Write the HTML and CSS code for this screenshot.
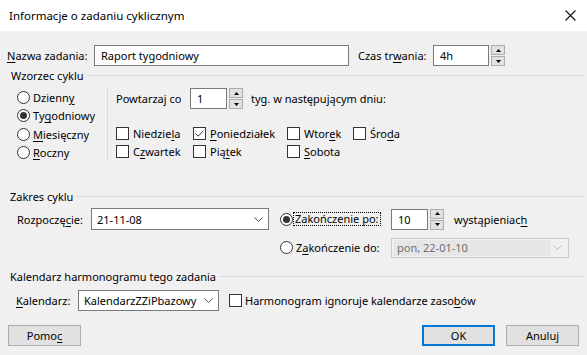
FILE: index.html
```html
<!DOCTYPE html>
<html lang="pl">
<head>
<meta charset="utf-8">
<title>Informacje o zadaniu cyklicznym</title>
<link rel="stylesheet" href="styles.css">
</head>
<body>
<div class="win">
  <div class="titlebar">
    <span class="title">Informacje o zadaniu cyklicznym</span>
    <svg class="close" width="11" height="11" viewBox="0 0 11 11"><path d="M0.5 0.5L10.5 10.5M10.5 0.5L0.5 10.5" stroke="#111" stroke-width="1.1" fill="none"/></svg>
  </div>
  <div class="content">
    <div class="row name-row">
      <span class="name-lbl"><u>N</u>azwa zadania:</span>
      <div class="tb name-tb">Raport tygodniowy</div>
      <span class="dur-lbl">Czas tr<u>w</u>ania:</span>
      <div class="tb dur-tb">4h</div>
      <div class="spin"><b><svg width="5" height="3" viewBox="0 0 5 3"><path d="M2.5 0L5 3H0z" fill="#000"/></svg></b><b><svg width="5" height="3" viewBox="0 0 5 3"><path d="M0 0H5L2.5 3z" fill="#000"/></svg></b></div>
    </div>

    <div class="gh g1"><span>Wzorzec cyklu</span><i></i></div>
    <div class="pattern">
      <div class="radios">
        <div class="opt"><span class="radio"></span><span>Dzienn<u>y</u></span></div>
        <div class="opt"><span class="radio on"></span><span>Ty<u>g</u>odniowy</span></div>
        <div class="opt"><span class="radio"></span><span><u>M</u>iesięczny</span></div>
        <div class="opt"><span class="radio"></span><span><u>R</u>oczny</span></div>
      </div>
      <div class="vsep"></div>
      <div class="weekly">
        <div class="row every">
          <span class="every-lbl">Powtarzaj co</span>
          <div class="tb small-tb">1</div>
          <div class="spin"><b><svg width="5" height="3" viewBox="0 0 5 3"><path d="M2.5 0L5 3H0z" fill="#000"/></svg></b><b><svg width="5" height="3" viewBox="0 0 5 3"><path d="M0 0H5L2.5 3z" fill="#000"/></svg></b></div>
          <span class="after">tyg. w następującym dniu:</span>
        </div>
        <div class="days">
          <div class="day"><span class="cb"></span><span>Niedzie<u>l</u>a</span></div>
          <div class="day"><span class="cb"><svg width="11" height="11" viewBox="0 0 11 11"><path d="M1.5 5.5L4.2 8.2L9.5 2.5" stroke="#333" stroke-width="1" fill="none"/></svg></span><span><u>P</u>oniedziałek</span></div>
          <div class="day"><span class="cb"></span><span>Wtor<u>e</u>k</span></div>
          <div class="day"><span class="cb"></span><span>Śro<u>d</u>a</span></div>
          <div class="day"><span class="cb"></span><span>C<u>z</u>wartek</span></div>
          <div class="day"><span class="cb"></span><span>Pią<u>t</u>ek</span></div>
          <div class="day"><span class="cb"></span><span><u>S</u>obota</span></div>
        </div>
      </div>
    </div>

    <div class="gh g2"><span>Zakres cyklu</span><i></i></div>
    <div class="row range1">
      <span class="start-lbl">Rozpoczę<u>c</u>ie:</span>
      <div class="combo start-combo"><span>21-11-08</span><svg width="9" height="5" viewBox="0 0 9 5"><path d="M0.5 0.5L4.5 4.5L8.5 0.5" stroke="#555" fill="none"/></svg></div>
      <div class="endopt"><span class="radio on"></span><span class="focus">Zakończenie po:</span></div>
      <div class="tb small-tb">10</div>
      <div class="spin"><b><svg width="5" height="3" viewBox="0 0 5 3"><path d="M2.5 0L5 3H0z" fill="#000"/></svg></b><b><svg width="5" height="3" viewBox="0 0 5 3"><path d="M0 0H5L2.5 3z" fill="#000"/></svg></b></div>
      <span class="after2">wystąpieniac<u>h</u></span>
    </div>
    <div class="row range2">
      <div class="endopt"><span class="radio"></span><span class="plain">Z<u>a</u>kończenie do:</span></div>
      <div class="combo disabled"><span class="dtext">pon, 22-01-10</span><svg width="9" height="5" viewBox="0 0 9 5"><path d="M0.5 0.5L4.5 4.5L8.5 0.5" stroke="#b5b5b5" fill="none"/></svg></div>
    </div>

    <div class="gh g3"><span>Kalendarz harmonogramu tego zadania</span><i></i></div>
    <div class="row cal">
      <span class="cal-lbl"><u>K</u>alendarz:</span>
      <div class="combo cal-combo"><span>KalendarzZZiPbazowy</span><svg width="9" height="5" viewBox="0 0 9 5"><path d="M0.5 0.5L4.5 4.5L8.5 0.5" stroke="#555" fill="none"/></svg></div>
      <span class="cb cal-cb"></span>
      <span class="cal-text">Harmonogram ignoruje kalendarze zaso<u>b</u>ów</span>
    </div>

    <div class="row buttons">
      <div class="btn"><span>Pomo<u>c</u></span></div>
      <div class="spacer"></div>
      <div class="btn ok">OK</div>
      <div class="btn">Anuluj</div>
    </div>
  </div>
</div>
</body>
</html>
```
FILE: styles.css
```css
* { box-sizing: border-box; margin: 0; padding: 0; }
html, body { width: 587px; height: 355px; overflow: hidden; }
body {
  font-family: "Noto Sans", "Segoe UI", sans-serif;
  font-size: 11px;
  color: #000;
  background: #f0f0f0;
}
u { text-decoration: underline; text-underline-offset: 2px; text-decoration-thickness: 1px; }

.win { width: 587px; height: 355px; background: #f0f0f0; }

.titlebar {
  height: 31px;
  background: #fff;
  display: flex;
  align-items: center;
  justify-content: space-between;
  padding: 0 11px 0 9px;
}
.title { font-size: 11.5px; }
.close { display: block; }

.content { padding: 0 2px 0 7px; }
.row { display: flex; align-items: center; }

.tb {
  height: 21px;
  border: 1px solid #7a7a7a;
  background: #fff;
  display: flex;
  align-items: center;
  padding-left: 6px;
  flex: none;
}
.spin {
  margin-left: 2px;
  width: 14px;
  height: 21px;
  display: flex;
  flex-direction: column;
  gap: 1px;
  flex: none;
}
.spin b {
  flex: 1;
  background: #e1e1e1;
  border: 1px solid #adadad;
  display: flex;
  align-items: center;
  justify-content: center;
}
.spin svg { display: block; }

.name-row { margin-top: 14px; height: 21px; }
.name-lbl { width: 87px; flex: none; }
.name-tb { width: 255px; }
.dur-lbl { margin-left: 9px; width: 75px; flex: none; }
.dur-tb { width: 56px; }

.gh { display: flex; align-items: center; height: 14px; }
.gh span { padding: 0 3px 0 4px; }
.gh i { flex: 1; border-top: 1px solid #dcdcdc; }
.g1 { margin-top: 2px; }
.g2 { margin-top: 27px; }
.g2 span, .g3 span { padding-left: 3px; }
.g3 { margin-top: 11px; }

.pattern { display: flex; margin-top: 6px; }
.radios { width: 100px; padding-left: 10px; flex: none; }
.opt { height: 18.5px; display: flex; align-items: center; gap: 3px; }
.radio {
  width: 13px;
  height: 13px;
  border: 1px solid #333;
  border-radius: 50%;
  background: #fff;
  flex: none;
  display: flex;
  align-items: center;
  justify-content: center;
}
.radio.on::after {
  content: "";
  width: 7px;
  height: 7px;
  border-radius: 50%;
  background: #333;
}
.vsep { width: 1px; height: 72px; background: #dcdcdc; flex: none; }
.weekly { margin-left: 8px; }
.every { height: 21px; }
.every-lbl { width: 74px; flex: none; }
.small-tb { width: 37px; }
.after { margin-left: 8px; }

.days {
  display: grid;
  grid-template-columns: 77px 94px 66px auto;
  grid-auto-rows: 18px;
  margin-top: 15px;
}
.day { display: flex; align-items: center; gap: 4px; }
.cb {
  width: 13px;
  height: 13px;
  border: 1px solid #333;
  background: #fff;
  flex: none;
  display: flex;
  align-items: center;
  justify-content: center;
}
.cb svg { display: block; }

.combo {
  height: 22px;
  border: 1px solid #7a7a7a;
  background: #fff;
  display: flex;
  align-items: center;
  justify-content: space-between;
  padding: 0 5px;
  flex: none;
}
.combo svg { display: block; }

.range1 { margin-top: 5px; height: 22px; padding-left: 10px; }
.start-lbl { width: 74px; flex: none; }
.start-combo { width: 178px; }
.endopt { display: flex; align-items: center; gap: 1px; width: 111px; margin-left: 11px; flex: none; }
.focus { outline: 1px dotted #000; padding: 0 1px; line-height: 12px; }
.plain { padding-left: 2px; }
.after2 { margin-left: 10px; }

.range2 { margin-top: 7px; height: 21px; padding-left: 273px; }
.range2 .endopt { margin-left: 0; }
.combo.disabled {
  width: 178px;
  height: 20px;
  border-color: #cccccc;
  background: #f0f0f0;
  padding: 0 6px 0 2px;
}
.dtext {
  color: #6d6d6d;
  background: #e6e6e6;
  height: 16px;
  width: 157px;
  display: flex;
  align-items: center;
  padding-left: 3px;
}

.cal { margin-top: 7px; height: 21px; padding-left: 9px; }
.cal-lbl { width: 62px; flex: none; }
.cal-combo { width: 141px; height: 21px; }
.cal-cb { margin-left: 10px; }
.cal-text { margin-left: 3px; }

.buttons { margin-top: 14px; padding-left: 1px; padding-right: 6px; gap: 11px; }
.spacer { flex: 1; }
.btn {
  width: 73px;
  height: 21px;
  background: #e1e1e1;
  border: 1px solid #adadad;
  display: flex;
  align-items: center;
  justify-content: center;
  flex: none;
}
.btn.ok { border: 2px solid #0078d7; }
```
